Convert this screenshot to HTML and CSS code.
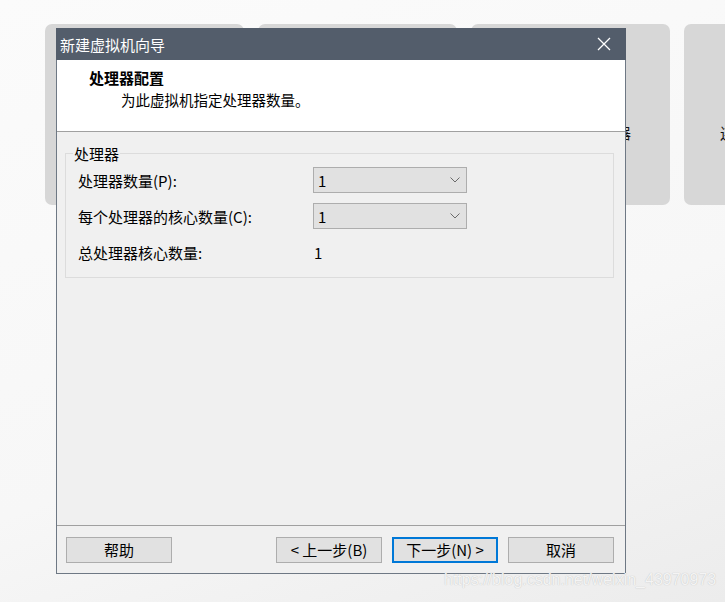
FILE: index.html
```html
<!DOCTYPE html>
<html lang="zh-CN">
<head>
    <meta charset="UTF-8">
    <title>新建虚拟机向导</title>
    <link rel="stylesheet" href="styles.css">
</head>
<body>
    <div class="cards">
        <div class="card"><span>创建新的虚拟机</span></div>
        <div class="card"><span>打开虚拟机</span></div>
        <div class="card"><span>自定义配置处理器</span></div>
        <div class="card"><span>连接</span></div>
    </div>

    <div class="dialog">
        <div class="titlebar">
            <span class="title">新建虚拟机向导</span>
            <svg class="close" width="14" height="14" viewBox="0 0 14 14">
                <path d="M1 1 L13 13 M13 1 L1 13" stroke="#ffffff" stroke-width="1.3" fill="none"/>
            </svg>
        </div>

        <div class="header">
            <h2>处理器配置</h2>
            <p>为此虚拟机指定处理器数量。</p>
        </div>

        <div class="content">
            <fieldset class="group">
                <legend>处理器</legend>
                <div class="row">
                    <label>处理器数量(P):</label>
                    <div class="combo">
                        <span>1</span>
                        <svg width="10" height="6" viewBox="0 0 10 6"><path d="M0.5 0.5 L5 5 L9.5 0.5" stroke="#6a6a6a" stroke-width="1" fill="none"/></svg>
                    </div>
                </div>
                <div class="row">
                    <label>每个处理器的核心数量(C):</label>
                    <div class="combo">
                        <span>1</span>
                        <svg width="10" height="6" viewBox="0 0 10 6"><path d="M0.5 0.5 L5 5 L9.5 0.5" stroke="#6a6a6a" stroke-width="1" fill="none"/></svg>
                    </div>
                </div>
                <div class="row">
                    <label>总处理器核心数量:</label>
                    <span class="value">1</span>
                </div>
            </fieldset>
        </div>

        <div class="footer">
            <button>帮助</button>
            <div class="nav-buttons">
                <button>&lt; 上一步(B)</button>
                <button class="primary">下一步(N) &gt;</button>
                <button>取消</button>
            </div>
        </div>
    </div>

    <div class="watermark">https://blog.csdn.net/weixin_43970973</div>
</body>
</html>
```

FILE: styles.css
```css
body {
    margin: 0;
    width: 725px;
    height: 602px;
    overflow: hidden;
    font-family: "Noto Sans CJK SC", "Liberation Sans", sans-serif;
    background: linear-gradient(160deg, #fbfbfb 0%, #f7f7f7 60%, #ececec 100%);
    position: relative;
}

.cards {
    display: flex;
    gap: 14px;
    padding: 24px 0 0 45px;
}
.card {
    flex: 0 0 199px;
    height: 181px;
    background-color: #d7d7d7;
    border-radius: 7px;
    box-sizing: border-box;
    padding: 98px 0 0 36px;
    font-size: 15px;
    color: #111;
    white-space: nowrap;
    overflow: hidden;
}
.card:nth-child(3) {
    padding-left: 40px;
}

.dialog {
    position: absolute;
    left: 56px;
    top: 28px;
    width: 570px;
    height: 546px;
    box-sizing: border-box;
    border: 1px solid #6e7884;
    border-top: none;
    background-color: #f0f0f0;
    display: flex;
    flex-direction: column;
}

.titlebar {
    height: 32px;
    margin: 0 -1px;
    background-color: #535d6b;
    display: flex;
    align-items: center;
    justify-content: space-between;
    padding: 0 15px 0 4px;
}
.titlebar .title {
    color: #ffffff;
    font-size: 15px;
}
.titlebar .close {
    display: block;
}

.header {
    height: 72px;
    box-sizing: border-box;
    background-color: #ffffff;
    border-bottom: 1px solid #a0a0a0;
    padding: 7px 0 0 32px;
}
.header h2 {
    margin: 0;
    font-size: 15px;
    font-weight: bold;
    line-height: 22px;
    color: #000;
}
.header p {
    margin: 0;
    padding-left: 32px;
    font-size: 14.5px;
    line-height: 22px;
    color: #000;
}

.content {
    flex: 1;
    padding: 13px 11px 0 8px;
}

.group {
    margin: 0;
    border: 1px solid #dcdcdc;
    padding: 0 12px 7px 12px;
}
.group legend {
    padding: 0 1px;
    margin-left: -5px;
    font-size: 15px;
    line-height: 17px;
    color: #000;
}

.row {
    display: flex;
    align-items: center;
    height: 36px;
    font-size: 15px;
    color: #000;
}
.row label {
    width: 235px;
}
.combo {
    width: 154px;
    height: 26px;
    box-sizing: border-box;
    border: 1px solid #adadad;
    background-color: #e1e1e1;
    display: flex;
    align-items: center;
    justify-content: space-between;
    padding: 0 6px 0 4px;
}
.value {
    padding-left: 1px;
}

.footer {
    border-top: 1px solid #a0a0a0;
    padding: 11px 11px 10px 9px;
    display: flex;
    justify-content: space-between;
}
.nav-buttons {
    display: flex;
    gap: 10px;
}
button {
    width: 106px;
    height: 26px;
    box-sizing: border-box;
    border: 1px solid #adadad;
    background-color: #e1e1e1;
    font-family: "Noto Sans CJK SC", "Liberation Sans", sans-serif;
    font-size: 15px;
    color: #000;
    padding: 0;
    line-height: 22px;
}
button.primary {
    border: 2px solid #0078d7;
}

.watermark {
    position: absolute;
    left: 444px;
    top: 571px;
    font-family: "Liberation Sans", sans-serif;
    font-size: 16px;
    color: #f4f4f4;
    text-shadow: 0 0 1px #b8b8b8;
}
```
